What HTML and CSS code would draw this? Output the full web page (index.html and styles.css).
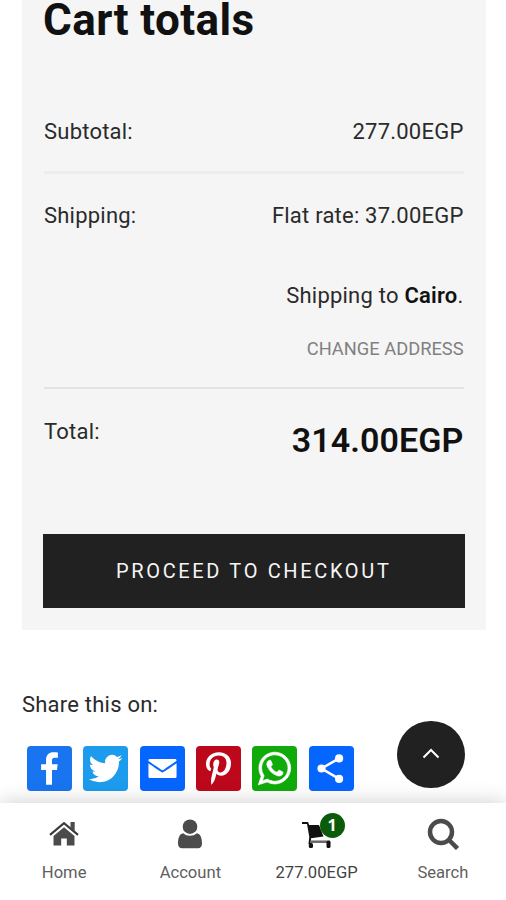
FILE: index.html
```html
<!DOCTYPE html>
<html lang="en">
<head>
<meta charset="utf-8">
<title>Cart</title>
<link rel="stylesheet" href="styles.css">
</head>
<body>
<div class="page">
  <main class="content">
    <section class="totals">
      <h2 class="title"><span>Cart totals</span></h2>
      <div class="row subtotal"><span>Subtotal:</span><span>277.00EGP</span></div>
      <div class="row shipping">
        <span>Shipping:</span>
        <div class="shipping-info">
          <span>Flat rate: 37.00EGP</span>
          <span class="destination">Shipping to <b>Cairo</b>.</span>
          <a class="change">CHANGE ADDRESS</a>
        </div>
      </div>
      <div class="row total"><span>Total:</span><strong class="grand">314.00EGP</strong></div>
      <button class="checkout">PROCEED TO CHECKOUT</button>
    </section>
    <section class="share">
      <div class="share-label"><span>Share this on:</span></div>
      <div class="share-icons">
        <svg class="social facebook" viewBox="0 0 32 32"><path d="M17.78 27.5V17.008h3.522l.527-4.09h-4.05v-2.61c0-1.182.33-1.99 2.023-1.99h2.166V4.66c-.375-.05-1.66-.16-3.155-.16-3.123 0-5.26 1.905-5.26 5.405v3.016h-3.53v4.09h3.53V27.5h4.223z"/></svg>
        <svg class="social twitter" viewBox="0 0 32 32"><path d="M28 8.557a9.913 9.913 0 0 1-2.828.775 4.93 4.93 0 0 0 2.166-2.725 9.738 9.738 0 0 1-3.13 1.194 4.92 4.92 0 0 0-3.593-1.55 4.924 4.924 0 0 0-4.794 6.049c-4.09-.21-7.72-2.17-10.15-5.15a4.942 4.942 0 0 0-.665 2.477c0 1.71.87 3.214 2.19 4.1a4.968 4.968 0 0 1-2.23-.616v.06c0 2.39 1.7 4.38 3.952 4.83-.414.115-.85.174-1.297.174-.318 0-.626-.03-.928-.086a4.935 4.935 0 0 0 4.6 3.42 9.893 9.893 0 0 1-6.114 2.107c-.398 0-.79-.023-1.175-.068a13.953 13.953 0 0 0 7.55 2.213c9.056 0 14.01-7.507 14.01-14.013 0-.213-.005-.426-.015-.637.96-.695 1.795-1.56 2.455-2.55z"/></svg>
        <svg class="social email" viewBox="0 0 32 32"><path d="M26 21.25v-9s-9.1 6.35-9.984 6.68C15.144 18.616 6 12.25 6 12.25v9c0 1.25.266 1.5 1.5 1.5h17c1.266 0 1.5-.22 1.5-1.5zm-.015-10.765c0-.91-.265-1.235-1.485-1.235h-17c-1.255 0-1.5.39-1.5 1.3l.015.14s9.035 6.22 10 6.56c1.02-.395 9.985-6.7 9.985-6.7l-.015-.065z"/></svg>
        <svg class="social pinterest" viewBox="0 0 32 32"><path d="M16.539 4.5c-6.277 0-9.442 4.5-9.442 8.253 0 2.272.86 4.293 2.705 5.046.303.125.574.005.662-.33.061-.231.205-.816.27-1.06.088-.331.053-.447-.191-.736-.532-.627-.873-1.439-.873-2.591 0-3.338 2.498-6.327 6.505-6.327 3.548 0 5.497 2.168 5.497 5.062 0 3.81-1.686 7.025-4.188 7.025-1.382 0-2.416-1.142-2.085-2.545.397-1.674 1.166-3.48 1.166-4.689 0-1.081-.581-1.983-1.782-1.983-1.413 0-2.548 1.462-2.548 3.419 0 1.247.421 2.091.421 2.091l-1.699 7.199c-.505 2.137-.076 4.755-.039 5.019.021.158.223.196.314.077.13-.17 1.813-2.247 2.384-4.324.162-.587.929-3.631.929-3.631.46.876 1.801 1.646 3.227 1.646 4.247 0 7.128-3.871 7.128-9.053.003-3.918-3.317-7.568-8.361-7.568z"/></svg>
        <svg class="social whatsapp" viewBox="0 0 32 32"><path d="M16.21 4.41C9.973 4.41 4.917 9.465 4.917 15.7c0 2.134.592 4.13 1.62 5.832L4.5 27.59l6.25-2.002a11.241 11.241 0 0 0 5.46 1.404c6.234 0 11.29-5.055 11.29-11.29 0-6.237-5.056-11.292-11.29-11.292zm0 20.69c-1.91 0-3.69-.57-5.173-1.553l-3.61 1.156 1.173-3.49a9.345 9.345 0 0 1-1.79-5.512c0-5.18 4.217-9.4 9.4-9.4 5.183 0 9.397 4.22 9.397 9.4 0 5.188-4.214 9.4-9.398 9.4zm5.293-6.832c-.284-.155-1.673-.906-1.934-1.012-.265-.106-.455-.16-.658.12s-.78.91-.954 1.096c-.176.186-.345.203-.628.048-.282-.154-1.2-.494-2.264-1.517-.83-.795-1.373-1.76-1.53-2.055-.158-.295 0-.445.15-.584.134-.124.3-.326.45-.488.15-.163.203-.28.306-.47.104-.19.06-.36-.005-.506-.066-.147-.59-1.587-.81-2.173-.218-.586-.46-.498-.63-.505-.168-.007-.358-.038-.55-.045-.19-.007-.51.054-.78.332-.277.274-1.05.943-1.1 2.362-.055 1.418.926 2.826 1.064 3.023.137.2 1.874 3.272 4.76 4.537 2.888 1.264 2.9.878 3.43.85.53-.027 1.734-.633 2-1.297.266-.664.287-1.24.22-1.363-.07-.123-.26-.203-.54-.357z"/></svg>
        <svg class="social more" viewBox="0 0 32 32"><path class="link" d="M21.4 8.8 8.9 16l12.5 7.4"/><circle cx="21.4" cy="8.8" r="2.9"/><circle cx="8.9" cy="16" r="2.9"/><circle cx="21.4" cy="23.4" r="2.9"/></svg>
      </div>
    </section>
  </main>
  <nav class="bar">
    <a class="tab"><svg class="glyph" viewBox="0 0 32 32"><path d="M16 9.2 26.5 18v9.500h-7.700v-7h-5.600v7H5.500V18z"/><path class="roof" d="M2 16.800 16 5.200l14 11.600"/><path d="M22.5 4h4.200v9.300l-4.200-3.500z"/></svg><span>Home</span></a>
    <a class="tab"><svg class="glyph" viewBox="0 0 32 32"><circle cx="16" cy="8.7" r="7.3"/><path d="M9.2 15.3c1.8 1.7 4.1 2.5 6.8 2.5s5-.8 6.8-2.5C26.5 16 28 20 28 25.5c0 3-1.6 4.7-4 4.7H8c-2.4 0-4-1.7-4-4.7C4 20 5.500 16 9.200 15.300z"/></svg><span>Account</span></a>
    <a class="tab cart"><div class="cart-icon"><svg class="glyph" viewBox="0 0 32 32"><path d="M1 4h6l1.200 3H18l4.500 11.500-12.500 1.800V26H7.500L8.300 19 6 6H1z"/><path class="rail" d="M9 23.700h20"/><rect x="7.800" y="25" width="4.200" height="5" rx="1.500"/><rect x="25.500" y="22.700" width="4" height="7.300" rx="1.500"/></svg><span class="badge">1</span></div><span>277.00EGP</span></a>
    <a class="tab"><svg class="glyph" viewBox="0 0 32 32"><circle class="lens" cx="14" cy="14" r="11"/><path class="handle" d="m22.500 22.500 8 8"/></svg><span>Search</span></a>
  </nav>
  <button class="to-top" aria-label="Back to top"><svg viewBox="0 0 20 20"><path d="m2.500 13.500 7.500-7.500 7.500 7.500"/></svg></button>
</div>
</body>
</html>
```
FILE: styles.css
```css
* { box-sizing: border-box; }
body {
  margin: 0;
  background: #fff;
  color: #2a2a2a;
  font: 400 22px/32px Roboto, "Liberation Sans", sans-serif;
  letter-spacing: .22px;
}
button { border: 0; padding: 0; font: inherit; }
.page {
  position: relative;
  width: 506px;
  height: 900px;
  display: flex;
  flex-direction: column;
  overflow: hidden;
}
.content { height: 803px; padding: 0 20.5px 0 22px; }
.totals {
  height: 630px;
  padding: 0 22px 22px;
  background: #f5f5f5;
  display: flex;
  flex-direction: column;
}
.title {
  margin: 0 0 76px -1px;
  font-size: 44px;
  line-height: 40px;
  font-weight: 700;
  letter-spacing: .4px;
  color: #111;
}
.row { display: flex; justify-content: space-between; align-items: flex-start; }
.subtotal { height: 58px; border-bottom: 3px solid #ededed; }
.shipping { height: 215px; padding-top: 26px; border-bottom: 2px solid #e3e3e3; }
.shipping-info { display: flex; flex-direction: column; align-items: flex-end; }
.destination { margin-top: 48px; }
.destination b { font-weight: 600; color: #111; }
.change { margin-top: 21px; font-size: 18.300px; letter-spacing: 0; color: #808080; }
.total { height: 145px; padding-top: 27px; }
.grand { padding-top: 8px; font-size: 34px; font-weight: 600; letter-spacing: .1px; color: #111; }
.checkout {
  height: 74px;
  margin: 0 -1px;
  padding-bottom: 1px;
  background: #212121;
  color: #f5f5f5;
  font-size: 20px;
  letter-spacing: 2.650px;
}
.share-label { padding-top: 59px; }
.share-icons { display: flex; gap: 11.300px; padding: 25px 0 0 5.100px; }
.social { width: 45px; height: 45px; border-radius: 4px; fill: #fff; }
.facebook { background: #1874ef; }
.twitter { background: #1d9bec; }
.email { background: #0566ff; }
.pinterest { background: #bd081c; }
.whatsapp { background: #10ab0a; }
.whatsapp path { stroke: #fff; stroke-width: .5; }
.more { background: #0566ff; }
.link { fill: none; stroke: #fff; stroke-width: 1.800; }
.bar {
  position: relative;
  height: 97px;
  display: grid;
  grid-template-columns: repeat(4, 1fr);
  padding-left: 1px;
  background: #fff;
  box-shadow: 0 0 20px rgba(0, 0, 0, .2);
  font-size: 16.600px;
  line-height: 22px;
  letter-spacing: 0;
  color: #606060;
}
.tab { display: flex; flex-direction: column; align-items: center; padding-top: 15px; gap: 12px; }
.glyph { display: block; width: 32px; height: 32px; fill: #4b4b4b; }
.roof { fill: none; stroke: #3c3c3c; stroke-width: 2.200; }
.lens { fill: none; stroke: #4b4b4b; stroke-width: 4.500; }
.handle { stroke: #4b4b4b; stroke-width: 4.500; }
.cart { color: #444; }
.cart-icon { position: relative; }
.cart .glyph { fill: #111; }
.rail { stroke: #666; stroke-width: 2.500; }
.badge {
  position: absolute;
  left: 19px;
  top: -5px;
  width: 25px;
  height: 25px;
  border-radius: 50%;
  background: #0b5c08;
  color: #fff;
  font: 700 16px/25px "Open Sans", sans-serif;
  text-align: center;
}
.to-top {
  position: absolute;
  left: 397px;
  top: 720.500px;
  width: 67.500px;
  height: 67.500px;
  border-radius: 50%;
  background: #212121;
  display: grid;
  place-items: center;
}
.to-top svg { width: 20px; height: 20px; fill: none; stroke: #fff; stroke-width: 2; }
```
